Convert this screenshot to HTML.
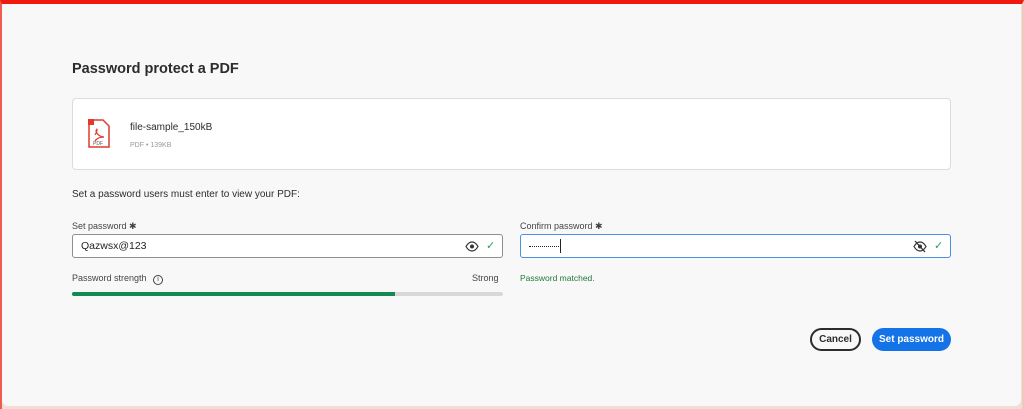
<!DOCTYPE html>
<html><head><style>
*{box-sizing:border-box;margin:0;padding:0}
body{width:1024px;height:409px;background:#f1ddd6;font-family:"Liberation Sans",sans-serif;position:relative;overflow:hidden}
.frame{position:absolute;left:0;top:0;width:1024px;height:409px;border-top:4px solid #f0190f;border-left:2px solid #f05a50;border-right:2px solid #f0c8c0}
.panel{position:absolute;left:2px;top:4px;width:1019px;height:402px;background:#f8f8f8;border-radius:0 0 6px 6px}
.a{position:absolute;white-space:nowrap}
h1{position:absolute;left:72px;top:61px;font-size:14.5px;font-weight:bold;color:#2c2c2c}
.card{position:absolute;left:72px;top:98px;width:879px;height:72px;background:#fff;border:1px solid #dcdcdc;border-radius:4px}
.lbl{font-size:9px;color:#444}
.inp{position:absolute;top:234px;height:24px;background:#fff;border:1px solid #8e8e8e;border-radius:3px}
.btn{position:absolute;top:328px;height:23px;border-radius:12px;font-size:10px;font-weight:bold;text-align:center;line-height:19px}
</style></head><body>
<div class="frame"></div>
<div class="panel"></div>
<h1>Password protect a PDF</h1>
<div class="card">
<svg class="a" style="left:14px;top:20px" width="24" height="30" viewBox="0 0 24 30">
<path d="M2 1h14l6 6v21H2z" fill="#fff" stroke="#e03a2f" stroke-width="1.5"/>
<rect x="1" y="0" width="6" height="6" fill="#e03a2f"/>
<path d="M8 16c3-5 2-8 1-4 1 4 5 6 8 6-3 0-7 1-9 4" fill="none" stroke="#e03a2f" stroke-width="1.2"/>
<text x="6" y="26" font-size="5" fill="#555" font-family="Liberation Sans">PDF</text>
</svg>
<div class="a" style="left:57px;top:23px;font-size:10px;color:#2c2c2c">file-sample_150kB</div>
<div class="a" style="left:57px;top:43px;font-size:7px;color:#999">PDF • 139KB</div>
</div>
<div class="a" style="left:72px;top:189px;font-size:10px;color:#2c2c2c">Set a password users must enter to view your PDF:</div>
<div class="a lbl" style="left:72px;top:221px">Set password ✱</div>
<div class="inp" style="left:72px;width:431px"><span class="a" style="left:8px;top:5px;font-size:10.5px;color:#222">Qazwsx@123</span>
<svg class="a" style="left:392px;top:6px" width="14" height="11" viewBox="0 0 14 11"><path d="M1 5.5C3 2 5 1 7 1s4 1 6 4.5C11 9 9 10 7 10S3 9 1 5.5z" fill="none" stroke="#333" stroke-width="1.2"/><circle cx="7" cy="5.5" r="2" fill="#333"/></svg>
<span class="a" style="left:413px;top:4px;font-size:11px;color:#2d9d5a">✓</span></div>
<div class="a lbl" style="left:520px;top:221px">Confirm password ✱</div>
<div class="inp" style="left:520px;width:431px;border-color:#4b8fe0"><span class="a" style="left:8px;top:11px;width:30px;height:0;border-top:1px dotted #222"></span><span class="a" style="left:39px;top:4px;width:1px;height:14px;background:#222"></span>
<svg class="a" style="left:392px;top:5px" width="14" height="13" viewBox="0 0 14 13"><path d="M1 6.5C3 3 5 2 7 2s4 1 6 4.5C11 10 9 11 7 11S3 10 1 6.5z" fill="none" stroke="#333" stroke-width="1.2"/><circle cx="7" cy="6.5" r="2" fill="#333"/><path d="M2 1l10 11" stroke="#333" stroke-width="1.3"/></svg>
<span class="a" style="left:413px;top:4px;font-size:11px;color:#2d9d5a">✓</span></div>
<div class="a lbl" style="left:72px;top:273px">Password strength <span style="display:inline-block;width:10px;height:10px;border:1px solid #444;border-radius:50%;font-size:7px;text-align:center;line-height:8px;margin-left:4px">i</span></div>
<div class="a lbl" style="left:472px;top:273px">Strong</div>
<div class="a" style="left:72px;top:292px;width:431px;height:4px;background:#d8d8d8;border-radius:2px"><div style="width:323px;height:4px;background:#128a56;border-radius:2px 0 0 2px"></div></div>
<div class="a" style="left:520px;top:273px;font-size:8.5px;color:#1f7a3a">Password matched.</div>
<div class="btn" style="left:810px;width:51px;border:2px solid #2c2c2c;color:#2c2c2c">Cancel</div>
<div class="btn" style="left:872px;width:79px;background:#1473e6;color:#fff;line-height:23px">Set password</div>
</body></html>
